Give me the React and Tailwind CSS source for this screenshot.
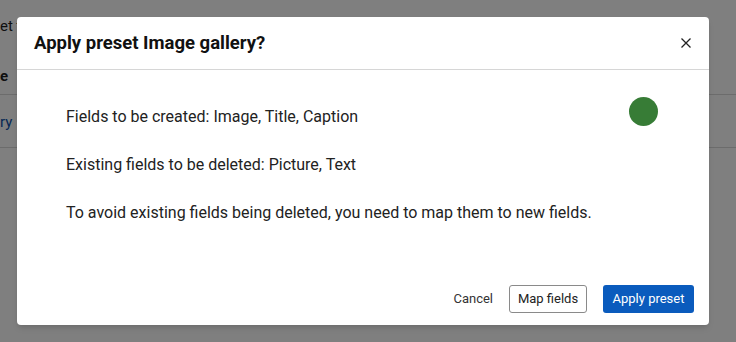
const App = () => {
  return (
    <div
      className="relative w-[736px] h-[342px] overflow-hidden bg-white text-[#1f1f1f]"
      style={{ fontFamily: "Roboto, 'Liberation Sans', sans-serif" }}>
      {/* page behind the dialog */}
      <div className="flex flex-col">
        <p className="h-[50px] pt-[15px] text-[15px]">et to</p>
        <p className="h-[44px] pt-[15px] text-[15px] font-bold">e</p>
        <div className="h-px bg-[#d8d8d8]" />
        <p className="h-[52px] pt-[16px] text-[15px] text-[#0a4fa8]">ry</p>
        <div className="h-px bg-[#d8d8d8]" />
      </div>

      <div className="absolute inset-0 bg-black/50" />

      <div className="absolute left-[17px] top-[17px] w-[692px] h-[308px] flex flex-col bg-white rounded-[4px] shadow-md">
        <div className="h-[53px] shrink-0 flex items-center justify-between pl-[17px] pr-[11px] border-b border-[#d6d6d6]">
          <h2 className="text-[18.5px] font-bold text-[#111] pt-[1px]">Apply preset Image gallery?</h2>
          <button className="w-[24px] h-[24px] flex items-center justify-center">
            <svg width="12" height="12" viewBox="0 0 12 12" fill="none" stroke="#222" strokeWidth="1.3">
              <path d="M1.5 1.5 L10.5 10.5 M10.5 1.5 L1.5 10.5" />
            </svg>
          </button>
        </div>

        <div className="relative flex-1 pt-[35px] pl-[49px] flex flex-col gap-[24px] text-[16px] leading-[24px] text-[#222]">
          <p>Fields to be created: Image, Title, Caption</p>
          <p>Existing fields to be deleted: Picture, Text</p>
          <p>To avoid existing fields being deleted, you need to map them to new fields.</p>
          <span className="absolute left-[612px] top-[27px] w-[29px] h-[29px] rounded-full bg-[#377c36]" />
        </div>

        <div className="flex items-center justify-end gap-4 pr-[15px] pb-[12px] text-[13px]">
          <button className="text-[#333]">Cancel</button>
          <button className="h-[28px] w-[78px] rounded-[3px] border border-[#8a8a8a] text-[#222]">Map fields</button>
          <button className="h-[28px] w-[91px] rounded-[3px] bg-[#0a5bbd] text-white">Apply preset</button>
        </div>
      </div>
    </div>
  );
};

export default App;
